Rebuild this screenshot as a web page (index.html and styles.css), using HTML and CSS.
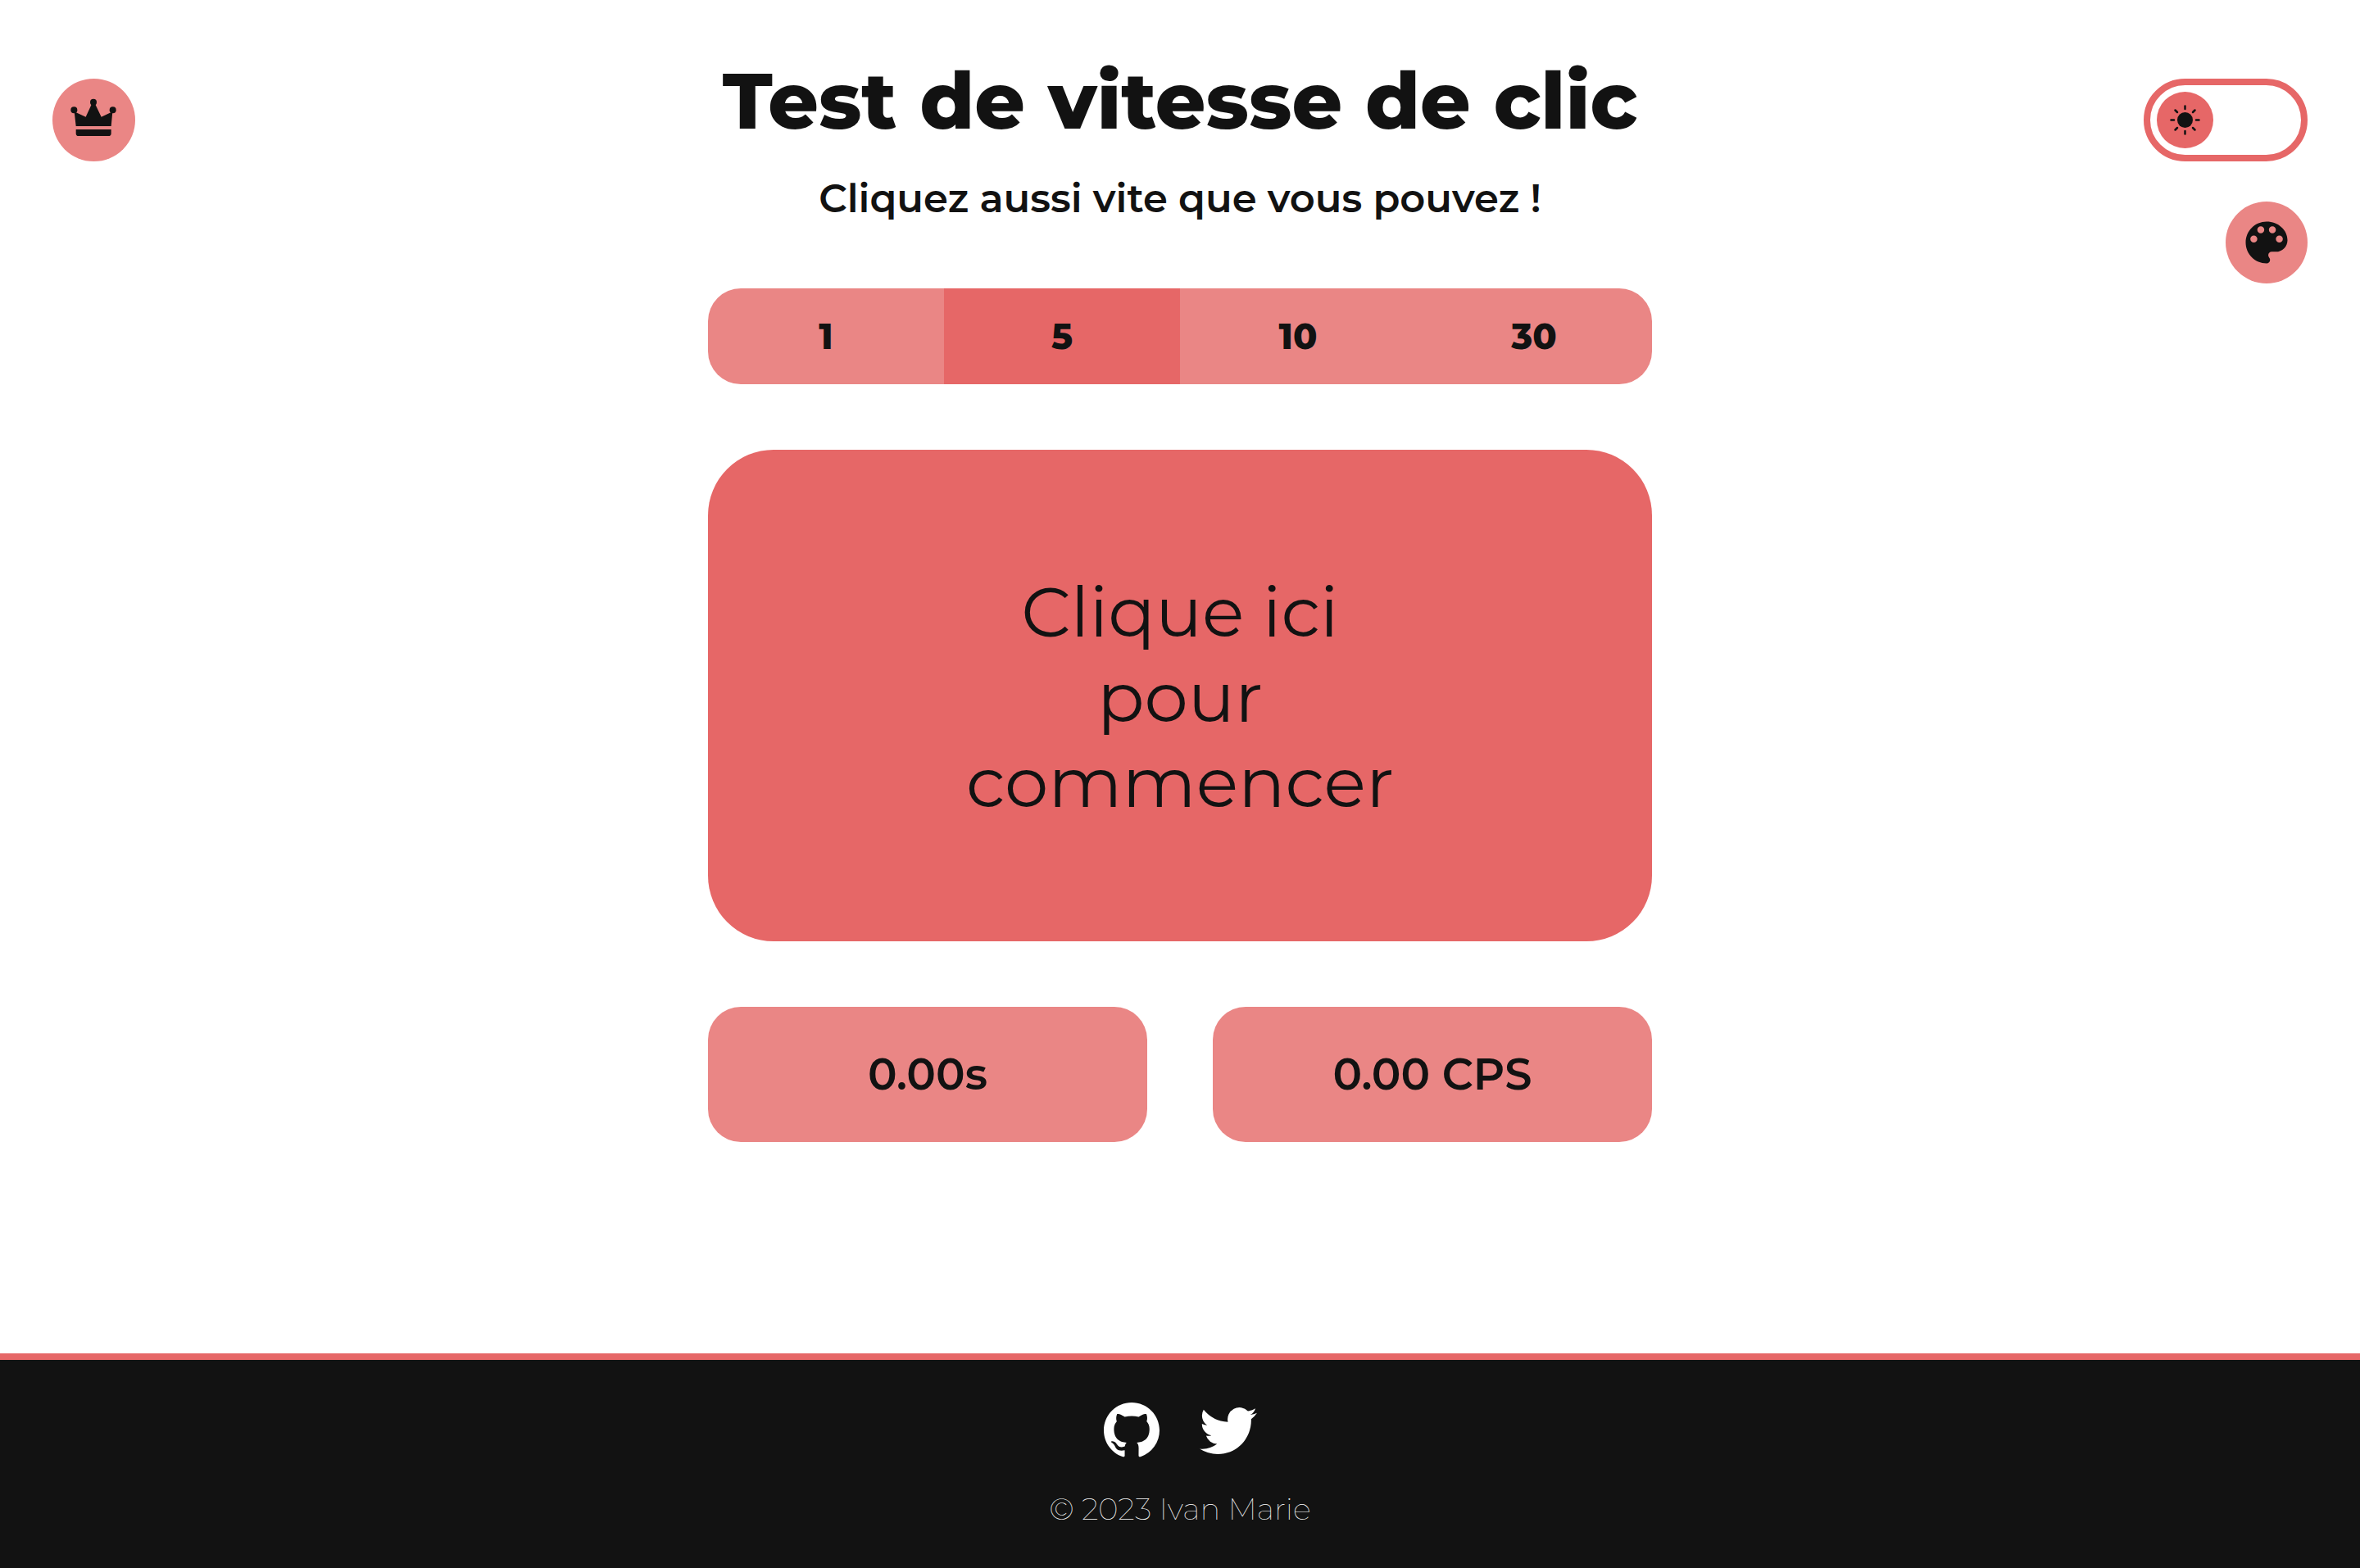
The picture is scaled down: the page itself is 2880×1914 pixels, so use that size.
FILE: index.html
```html
<!DOCTYPE html>
<html lang="fr">
<head>
<meta charset="utf-8">
<meta name="viewport" content="width=device-width, initial-scale=1">
<title>Test de vitesse de clic</title>
<link rel="stylesheet" href="styles.css">
</head>
<body>
<div class="page">
  <aside class="side">
    <button class="round-button" type="button" aria-label="Classement">
      <svg class="icon-crown" viewBox="73 78 303 303" aria-hidden="true">
        <circle cx="152" cy="193" r="12"/><circle cx="223" cy="164" r="12"/><circle cx="294" cy="193" r="12"/>
        <path d="M153 199 L159 252 H288 L293 199 L252 218 L229 170 H217 L195 218 Z"/>
        <path d="M159 264 H288 V278 Q288 288 278 288 H169 Q159 288 159 278 Z"/>
      </svg>
    </button>
  </aside>

  <main class="game">
    <h1 class="title">Test de vitesse de clic</h1>
    <p class="subtitle">Cliquez aussi vite que vous pouvez !</p>
    <div class="durations" role="group" aria-label="Durée en secondes">
      <button class="duration" type="button">1</button>
      <button class="duration active" type="button" aria-pressed="true">5</button>
      <button class="duration" type="button">10</button>
      <button class="duration" type="button">30</button>
    </div>
    <button class="click-zone" type="button">Clique ici<br>pour<br>commencer</button>
    <div class="scores">
      <p class="score">0.00s</p>
      <p class="score">0.00 CPS</p>
    </div>
  </main>

  <aside class="side side-right">
    <label class="theme">
      <input class="theme-input" type="checkbox" aria-label="Mode sombre">
      <svg class="knob" viewBox="-69 -69 138 138" aria-hidden="true">
        <circle r="19"/>
        <path d="M0 -34V-27M0 34V27M-34 0H-27M34 0H27M-24 -24L-19 -19M24 -24L19 -19M-24 24L-19 19M24 24L19 19"/>
      </svg>
    </label>
    <button class="round-button palette-button" type="button" aria-label="Couleurs">
      <svg class="icon-palette" viewBox="0 0 24 24" aria-hidden="true">
        <path d="M12 3c-4.97 0-9 4.03-9 9s4.03 9 9 9c.83 0 1.5-.67 1.5-1.5 0-.39-.15-.74-.39-1.01-.23-.26-.38-.61-.38-.99 0-.83.67-1.5 1.5-1.5H16c2.76 0 5-2.24 5-5 0-4.42-4.03-8-9-8zm-5.5 9c-.83 0-1.5-.67-1.5-1.5S5.67 9 6.5 9 8 9.67 8 10.5 7.33 12 6.5 12zm3-4C8.67 8 8 7.33 8 6.5S8.67 5 9.5 5s1.5.67 1.5 1.5S10.33 8 9.5 8zm5 0c-.83 0-1.5-.67-1.5-1.5S13.67 5 14.5 5s1.5.67 1.5 1.5S15.33 8 14.5 8zm3 4c-.83 0-1.5-.67-1.5-1.5S16.67 9 17.5 9s1.5.67 1.5 1.5-.67 1.5-1.5 1.5z"/>
      </svg>
    </button>
  </aside>
</div>

<footer class="footer">
  <nav class="social">
    <a class="social-link" href="#github" aria-label="GitHub">
      <svg class="icon-github" viewBox="0 0 16 16" aria-hidden="true"><path d="M8 0C3.58 0 0 3.58 0 8c0 3.54 2.29 6.53 5.47 7.59.4.07.55-.17.55-.38 0-.19-.01-.82-.01-1.49-2.01.37-2.53-.49-2.69-.94-.09-.23-.48-.94-.82-1.13-.28-.15-.68-.52-.01-.53.63-.01 1.08.58 1.23.82.72 1.21 1.87.87 2.33.66.07-.52.28-.87.51-1.07-1.78-.2-3.64-.89-3.64-3.95 0-.87.31-1.59.82-2.15-.08-.2-.36-1.02.08-2.12 0 0 .67-.21 2.2.82.64-.18 1.32-.27 2-.27s1.36.09 2 .27c1.53-1.04 2.2-.82 2.2-.82.44 1.1.16 1.92.08 2.12.51.56.82 1.27.82 2.15 0 3.07-1.87 3.75-3.65 3.95.29.25.54.73.54 1.48 0 1.07-.01 1.93-.01 2.2 0 .21.15.46.55.38A8.01 8.01 0 0 0 16 8c0-4.42-3.58-8-8-8z"/></svg>
    </a>
    <a class="social-link" href="#twitter" aria-label="Twitter">
      <svg class="icon-twitter" viewBox="0 2 16 13" aria-hidden="true"><path d="M5.026 15c6.038 0 9.341-5.003 9.341-9.334 0-.14 0-.282-.006-.422A6.685 6.685 0 0 0 16 3.542a6.658 6.658 0 0 1-1.889.518 3.301 3.301 0 0 0 1.447-1.817 6.533 6.533 0 0 1-2.087.793A3.286 3.286 0 0 0 7.875 6.03a9.325 9.325 0 0 1-6.767-3.429 3.289 3.289 0 0 0 1.018 4.382A3.323 3.323 0 0 1 .64 6.575v.045a3.288 3.288 0 0 0 2.632 3.218 3.203 3.203 0 0 1-.865.115 3.23 3.23 0 0 1-.614-.057 3.283 3.283 0 0 0 3.067 2.277A6.588 6.588 0 0 1 .78 13.58a6.32 6.32 0 0 1-.78-.045A9.344 9.344 0 0 0 5.026 15z"/></svg>
    </a>
  </nav>
  <p class="copyright">© 2023 Ivan Marie</p>
</footer>
</body>
</html>
```
FILE: styles.css
```css
:root {
  --primary: #e66767;
  --secondary: #ea8685;
  --dark: #121212;
  --light: #ffffff;
}

* {
  box-sizing: border-box;
  margin: 0;
  padding: 0;
}

body {
  display: flex;
  flex-direction: column;
  min-height: 100vh;
  background: var(--light);
  color: var(--dark);
  font-family: Montserrat, Inter, sans-serif;
}

button {
  border: 0;
  color: inherit;
  font: inherit;
  cursor: pointer;
}

.page {
  flex: 1;
  display: grid;
  grid-template-columns: 1fr 40% 1fr;
}

.side {
  display: flex;
  flex-direction: column;
  align-items: flex-start;
  gap: 49px;
  padding: 96px 64px;
}

.side-right {
  align-items: flex-end;
}

.round-button {
  display: grid;
  place-items: center;
  width: 101px;
  height: 101px;
  border-radius: 50%;
  background: var(--secondary);
  fill: var(--dark);
}

.palette-button {
  width: 100px;
  height: 100px;
}

.icon-crown {
  width: 101px;
  height: 101px;
}

.icon-palette {
  width: 68px;
  height: 68px;
}

.theme {
  display: grid;
  align-items: center;
  cursor: pointer;
}

.theme-input {
  grid-area: 1 / 1;
  appearance: none;
  width: 200px;
  height: 101px;
  border: 8px solid var(--primary);
  border-radius: 51px;
}

.knob {
  grid-area: 1 / 1;
  width: 69px;
  height: 69px;
  margin-left: 16px;
  border-radius: 50%;
  background: var(--primary);
  fill: var(--dark);
  stroke: var(--dark);
  stroke-width: 5px;
  stroke-linecap: round;
}

.knob circle {
  stroke: none;
}

.game {
  padding-top: 63px;
  text-align: center;
}

.title {
  font-size: 96px;
  font-weight: 800;
  line-height: 120px;
}

.subtitle {
  margin: 29px 0 80px;
  font-size: 48px;
  font-weight: 600;
  line-height: 60px;
}

.durations {
  display: grid;
  grid-template-columns: repeat(4, 1fr);
  overflow: hidden;
  border-radius: 40px;
}

.duration {
  height: 117px;
  background: var(--secondary);
  font-size: 43px;
  font-weight: 800;
}

.duration.active {
  background: var(--primary);
}

.click-zone {
  width: 100%;
  height: 600px;
  margin: 80px 0;
  padding-top: 3px;
  border-radius: 80px;
  background: var(--primary);
  font-size: 85px;
  font-weight: 400;
  line-height: 104px;
}

.scores {
  display: grid;
  grid-template-columns: 1fr 1fr;
  gap: 80px;
}

.score {
  padding: 50px 0;
  border-radius: 40px;
  background: var(--secondary);
  font-size: 53px;
  font-weight: 600;
  line-height: 65px;
}

.footer {
  display: flex;
  flex-direction: column;
  align-items: center;
  gap: 38px;
  padding: 52px 0 48px;
  border-top: 8px solid var(--primary);
  background: var(--dark);
  color: var(--light);
}

.social {
  display: flex;
  align-items: center;
  gap: 49px;
}

.social-link {
  display: flex;
  fill: var(--light);
}

.icon-github {
  width: 68px;
  height: 68px;
}

.icon-twitter {
  width: 70px;
  height: 57px;
}

.copyright {
  font-size: 37px;
  font-weight: 100;
  line-height: 48px;
}
```
